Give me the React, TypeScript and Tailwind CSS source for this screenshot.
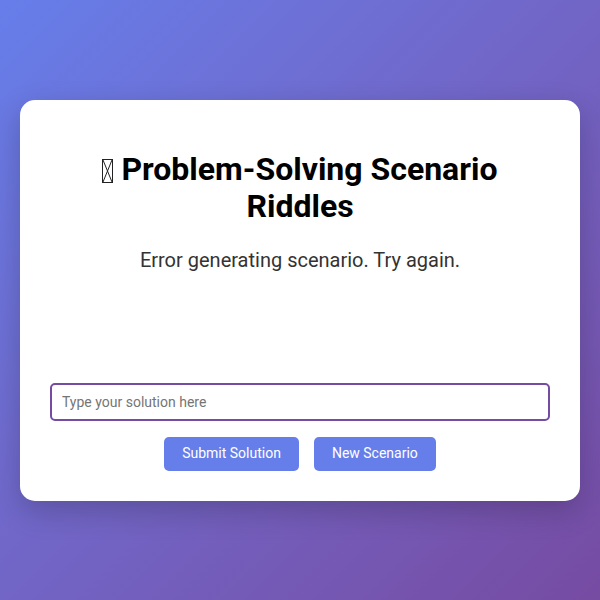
import { useState } from 'react';

// missing-glyph box shown before the title
const Tofu = () => (
  <svg width="11" height="24" viewBox="0 0 11 24" className="inline-block align-[-3px]" fill="none" stroke="#222" strokeWidth="1">
    <rect x="0.5" y="0.5" width="10" height="23" />
    <path d="M1 1 L10 23 M10 1 L1 23" />
  </svg>
);

const App = () => {
  const [answer, setAnswer] = useState('');

  return (
    <div className="min-h-screen w-full flex items-center justify-center bg-gradient-to-br from-[#667eea] to-[#764ba2] font-['Roboto',_'Noto_Sans',_sans-serif]">
      <div className="mx-5 w-full bg-white rounded-[15px] p-[30px] text-center shadow-[0_10px_30px_rgba(0,0,0,0.2)]">
        <h1 className="mt-[21px] mb-[21px] text-[32px] leading-[37px] font-bold text-black px-5">
          <Tofu /> Problem-Solving Scenario Riddles
        </h1>
        <div className="min-h-[137px]">
          <p className="text-[20px] leading-[28px] text-[#333]">Error generating scenario. Try again.</p>
        </div>
        <input
          type="text"
          value={answer}
          onChange={(e) => setAnswer(e.target.value)}
          placeholder="Type your solution here"
          className="block w-full h-[38px] px-[10px] border-2 border-[#764ba2] rounded-[5px] text-[14px] text-[#333] placeholder:text-[#757575] outline-none"
        />
        <div className="mt-4 flex justify-center gap-[15px]">
          <button className="h-[34px] px-[18px] rounded-[5px] bg-[#667eea] text-white text-[14px]">
            Submit Solution
          </button>
          <button className="h-[34px] px-[18px] rounded-[5px] bg-[#667eea] text-white text-[14px]">
            New Scenario
          </button>
        </div>
      </div>
    </div>
  );
};

export default App;
